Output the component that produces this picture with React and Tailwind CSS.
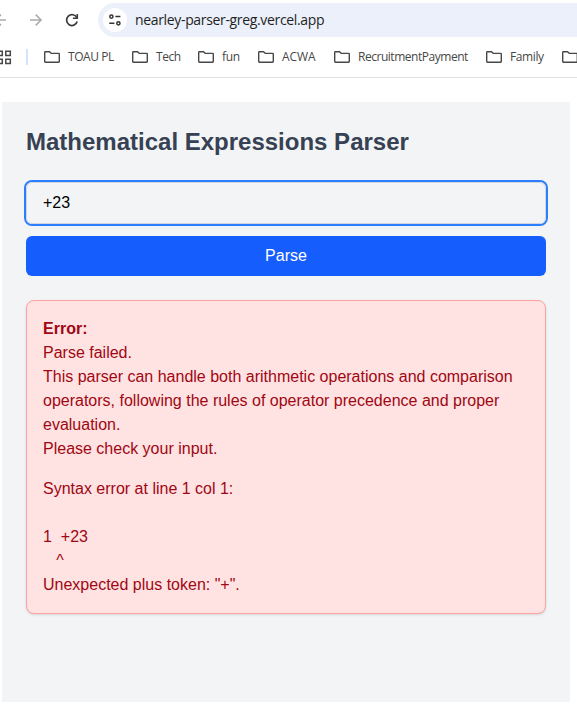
const bookmarks = [
  { label: 'TOAU PL', width: 'w-[88px]', spacing: 'tracking-[-0.42px]' },
  { label: 'Tech', width: 'w-[66px]', spacing: 'tracking-[-0.45px]' },
  { label: 'fun', width: 'w-[60px]', spacing: 'tracking-[-0.3px]' },
  { label: 'ACWA', width: 'w-[76px]', spacing: 'tracking-[-0.1px]' },
  { label: 'RecruitmentPayment', width: 'w-[152px]', spacing: 'tracking-[-0.47px]' },
  { label: 'Family', width: 'w-[76px]', spacing: 'tracking-[-0.4px]' },
  { label: '', width: 'w-[24px]', spacing: '' },
];

function Folder() {
  return (
    <svg className="h-3 w-4 shrink-0" viewBox="0 0 16 12" fill="none" stroke="#474747" strokeWidth="1.4" strokeLinejoin="round">
      <path d="M.7 10.6V1.4Q.7.7 1.4.7H5.6L7.4 2.4H14.6Q15.3 2.4 15.3 3.1V10.6Q15.3 11.3 14.6 11.3H1.4Q.7 11.3.7 10.6Z" />
    </svg>
  );
}

function Toolbar() {
  return (
    <div className="flex h-10 w-full items-center overflow-hidden">
      <svg className="h-10 w-[98px] shrink-0" viewBox="0 0 98 40" fill="none" strokeWidth="1.5">
        <path d="M-5 20H6M1 14.6L-4.4 20L1 25.4" stroke="#ababab" />
        <path d="M30 20H41M35.7 14.6L41.1 20L35.7 25.4" stroke="#ababab" />
        <path d="M76.8 17.6A5.4 5.4 0 1 0 77.2 21.6" stroke="#3c3c3c" strokeWidth="1.7" />
        <path d="M77.3 14V18.3H72.9" stroke="#3c3c3c" strokeWidth="1.6" />
      </svg>
      <div className="flex h-[34px] grow items-center rounded-l-full bg-[#ebf0fa] pl-[5px]">
        <div className="flex size-6 shrink-0 items-center justify-center rounded-full bg-white">
          <svg className="h-3 w-3" viewBox="0 0 12 12" fill="none" stroke="#333" strokeWidth="1.5">
            <circle cx="2.4" cy="2.6" r="1.6" />
            <path d="M6.4 2.6H11.4M.3 9.3H5.4" />
            <circle cx="9.4" cy="9.3" r="1.6" />
          </svg>
        </div>
        <span className="ml-2 whitespace-nowrap font-['Open_Sans','Noto_Sans',sans-serif] text-[14px] leading-5 tracking-[-0.34px] text-[#1f1f1f]">
          nearley-parser-greg.vercel.app
        </span>
      </div>
    </div>
  );
}

function BookmarkBar() {
  return (
    <div className="flex h-[38px] w-full items-center overflow-hidden border-b border-[#dedfe1] pb-[3px]">
      <svg className="h-[15px] w-3 shrink-0" viewBox="0 0 12 15" fill="none" stroke="#474747" strokeWidth="1.5">
        <path d="M-2.3 1.2H2.3V5.4H-2.3ZM5.8 1.2H10.3V5.4H5.8ZM-2.3 9.2H2.3V13.4H-2.3ZM5.8 9.2H10.3V13.4H5.8Z" />
      </svg>
      <div className="ml-[14px] mr-4 h-4 w-0.5 shrink-0 bg-[#d3e3fd]" />
      {bookmarks.map((b, i) => (
        <div key={i} className={`flex shrink-0 items-center gap-2 ${b.width}`}>
          <Folder />
          <span className={`whitespace-nowrap font-['Open_Sans','Noto_Sans',sans-serif] text-[12px] leading-4 text-[#474747] ${b.spacing}`}>
            {b.label}
          </span>
        </div>
      ))}
    </div>
  );
}

export default function App() {
  return (
    <div className="h-[714px] w-[577px] overflow-hidden bg-white font-['Liberation_Sans',Arial,sans-serif]">
      <Toolbar />
      <BookmarkBar />
      <main className="ml-0.5 mt-6 h-[600px] w-[568px] bg-gray-100 p-6">
        <h1 className="mb-6 whitespace-nowrap text-2xl font-bold text-gray-700">Mathematical Expressions Parser</h1>
        <input
          className="mb-3 block h-[42px] w-[520px] rounded-md border border-gray-300 px-4 py-2 text-base text-black outline-none ring-2 ring-[#2b7fff]"
          defaultValue="+23"
        />
        <button className="block h-10 w-[520px] rounded-md bg-[#155dfc] text-base text-white">Parse</button>
        <div className="mt-6 w-[520px] rounded-lg border border-[#ffa2a2] bg-[#ffe2e2] p-4 text-base text-[#9f0712] shadow-sm">
          <p className="font-bold">Error:</p>
          <p>Parse failed.</p>
          <p>This parser can handle both arithmetic operations and comparison operators, following the rules of operator precedence and proper evaluation.</p>
          <p>Please check your input.</p>
          <p className="mt-4 whitespace-pre-wrap">{'Syntax error at line 1 col 1:\n\n1  +23\n   ^\nUnexpected plus token: "+".'}</p>
        </div>
      </main>
    </div>
  );
}
